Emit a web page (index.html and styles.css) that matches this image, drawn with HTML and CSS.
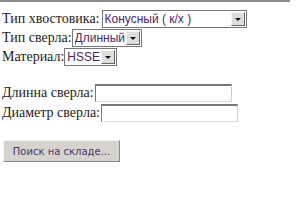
FILE: index.html
```html
<!DOCTYPE html>
<html lang="ru">
<head>
    <meta charset="UTF-8">
    <title>Поиск сверла</title>
    <link rel="stylesheet" href="styles.css">
</head>
<body>
    <div class="topline"></div>
    <form class="search">
        <div class="row">
            <label for="shank">Тип хвостовика:</label>
            <span class="sel sel-wide">
                <select id="shank"><option>Конусный ( к/х )</option></select>
            </span>
        </div>
        <div class="row">
            <label for="drill">Тип сверла:</label>
            <span class="sel sel-mid">
                <select id="drill"><option>Длинный</option></select>
            </span>
        </div>
        <div class="row">
            <label for="mat">Материал:</label>
            <span class="sel sel-small">
                <select id="mat"><option>HSSE</option></select>
            </span>
        </div>

        <div class="row row-input gap">
            <label for="len">Длинна сверла:</label>
            <input type="text" id="len" class="field">
        </div>
        <div class="row row-input">
            <label for="dia">Диаметр сверла:</label>
            <input type="text" id="dia" class="field">
        </div>

        <button type="button" class="btn">Поиск на складе...</button>
    </form>
</body>
</html>
```

FILE: styles.css
```css
body {
    margin: 0;
    padding: 0 2px;
    font-family: "Liberation Serif", "Times New Roman", serif;
    font-size: 14px;
    color: #222;
    background: #fff;
}

.topline {
    width: 290px;
    height: 2px;
    background: #8a8a8a;
    margin-left: -2px;
    margin-bottom: 7px;
}

.row {
    display: flex;
    align-items: center;
    height: 19px;
}

.row-input {
    height: 20px;
}

.row.gap {
    margin-top: 17px;
}

label {
    white-space: nowrap;
}

.sel {
    position: relative;
    display: inline-block;
    height: 18px;
}

.sel-wide {
    margin-left: 2px;
    width: 145px;
}

.sel-mid { width: 70px; }
.sel-small { width: 53px; }

.sel select {
    appearance: none;
    -webkit-appearance: none;
    box-sizing: border-box;
    width: 100%;
    height: 18px;
    border: 1px solid #777;
    border-radius: 0;
    background: #fff;
    padding: 0 0 0 2px;
    font-family: "Liberation Sans", Tahoma, Arial, sans-serif;
    font-size: 12px;
    color: #4a2868;
}

.sel::after {
    content: "";
    position: absolute;
    top: 2px;
    right: 2px;
    width: 14px;
    height: 14px;
    box-sizing: border-box;
    background: #ddd;
    border: 1px solid;
    border-color: #f4f4f4 #666 #666 #f4f4f4;
}

.sel::before {
    content: "";
    position: absolute;
    z-index: 1;
    top: 8px;
    right: 6px;
    border-left: 3px solid transparent;
    border-right: 3px solid transparent;
    border-top: 3px solid #111;
}

.field {
    box-sizing: border-box;
    width: 137px;
    height: 18px;
    margin: 0 0 0 1px;
    border: 1px solid;
    border-color: #777 #ccc #ddd #777;
    border-top-width: 2px;
    padding: 0 2px;
}

.btn {
    display: block;
    margin-top: 17px;
    margin-left: 1px;
    width: 117px;
    height: 22px;
    background: #d6d3ce;
    border: 1px solid;
    border-color: #f4f4f4 #888 #888 #f4f4f4;
    font-family: "DejaVu Sans", Verdana, sans-serif;
    font-size: 10px;
    color: #4a3a6a;
    padding: 0;
}
```
